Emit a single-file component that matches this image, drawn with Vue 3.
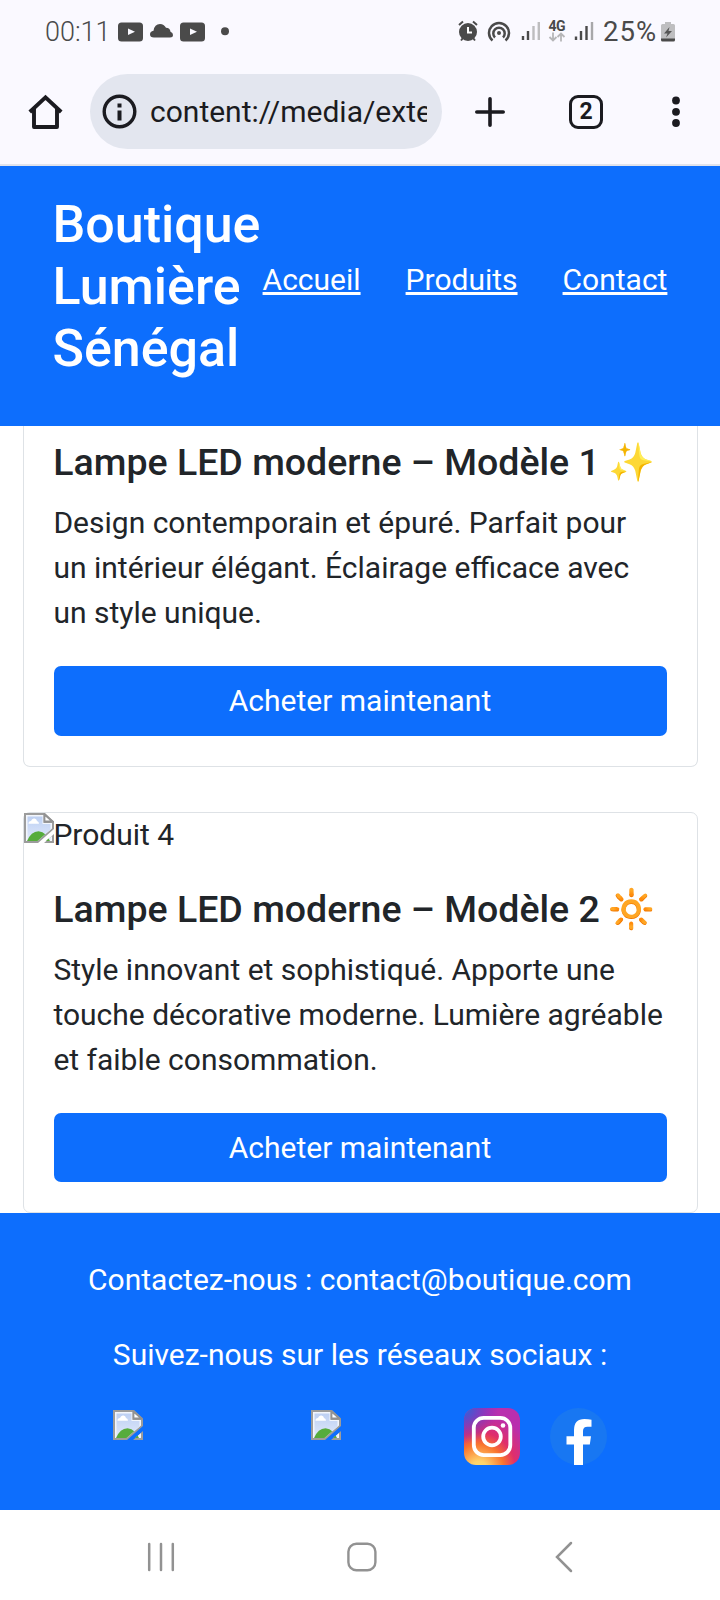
<script setup>
const links = ['Accueil', 'Produits', 'Contact']
const products = [
  {
    id: 3,
    image: '',
    title: 'Lampe LED moderne – Modèle 1',
    emoji: '✨',
    text: 'Design contemporain et épuré. Parfait pour un intérieur élégant. Éclairage efficace avec un style unique.',
  },
  {
    id: 4,
    image: 'Produit 4',
    title: 'Lampe LED moderne – Modèle 2',
    emoji: '🔆',
    text: 'Style innovant et sophistiqué. Apporte une touche décorative moderne. Lumière agréable et faible consommation.',
  },
]
</script>

<template>
  <div class="screen">
    <svg class="defs" width="0" height="0" aria-hidden="true">
      <defs>
        <linearGradient id="sky" x1="0" y1="0" x2="0" y2="1">
          <stop offset="0" stop-color="#bdd0f3" />
          <stop offset="1" stop-color="#dfe8fb" />
        </linearGradient>
        <radialGradient id="igWarm" cx=".27" cy="1.08" r=".99">
          <stop offset="0" stop-color="#ffdd70" />
          <stop offset=".15" stop-color="#ffd36b" />
          <stop offset=".45" stop-color="#f9742e" />
          <stop offset=".66" stop-color="#e02f6a" />
          <stop offset="1" stop-color="#b92fae" />
        </radialGradient>
        <radialGradient id="igCool" cx="0" cy="0" r=".62">
          <stop offset="0" stop-color="#3771d8" />
          <stop offset=".2" stop-color="#4b55cf" />
          <stop offset="1" stop-color="#7a28c8" stop-opacity="0" />
        </radialGradient>
        <symbol id="broken" viewBox="0 0 30 30">
          <path d="M0 0H21L30 8.500V16L14 30H0ZM30 21V30H20Z" fill="#9c9c9c" />
          <path d="M2 2H19.500V10H28V15.500L13.500 28H2ZM28 23V28H22.500Z" fill="#f3f6fc" />
          <path d="M3.500 3.500H18.500V11H26.500V16.500L14 27H3.500ZM26.500 24.500V27H24Z" fill="url(#sky)" />
          <path d="M4.500 10.500Q4.500 8 7 8Q8 5 10.500 5.500Q12.500 5.500 13 8Q15 8.500 15 10.800H4.500Z" fill="#fff" />
          <path d="M3 28Q7 18.500 14.500 18.200Q19 18.500 21.200 21.300L13.500 28ZM24.500 25.500L26 28H22Z" fill="#56ac3b" />
          <path d="M20.500 1.500V8.500H28.500Z" fill="#fff" stroke="#929292" stroke-width="1.800" />
        </symbol>
      </defs>
    </svg>

    <div class="status">
      <span class="time">00:11</span>
      <svg class="notif" width="112" height="20" viewBox="0 0 112 20" fill="#4a4a4a">
        <rect width="25" height="19" rx="3.500" y=".5" /><path d="M10 6.500V13L17 9.700Z" fill="#faf9ff" />
        <path d="M36 15.500Q32 15.500 32 12.200Q32 9.300 35.500 8.700Q36.500 2 42 2Q46 2 48 5.800Q52 6 52.500 9.700Q55 10.500 55 13Q55 15.500 52 15.500Z" />
        <rect x="62" y=".5" width="25" height="19" rx="3.500" /><path d="M72 6.500V13L79 9.700Z" fill="#faf9ff" />
        <circle cx="107" cy="9.200" r="4" />
      </svg>
      <svg class="sys" width="142" height="24" viewBox="0 0 142 24" fill="none" stroke="#4a4a4a">
        <circle cx="10" cy="12" r="9" fill="#4a4a4a" stroke="none" />
        <path d="M1 5L5 1.500M19 5L15 1.500M3 20.500L5 18M17 20.500L15 18" stroke-width="2" />
        <path d="M10 7V12.500H14" stroke="#fff" stroke-width="2" />
        <circle cx="41" cy="13" r="2" fill="#4a4a4a" stroke="none" />
        <path d="M34.500 20.500A10 10 0 1 1 47.500 20.500M37 17.500A5.700 5.700 0 1 1 45 17.500" stroke-width="2.500" />
        <path d="M65 16V20M70 11V20" stroke-width="2.400" />
        <path d="M75.500 6V20M80.800 2V20" stroke="#bdbdbf" stroke-width="2.400" />
        <path d="M95 12.500V20M91.500 17L95 20.500L98.500 17M103 21.500V13.500M99.500 17L103 13.500L106.500 17" stroke="#b6b6b8" stroke-width="1.800" />
        <path d="M118 16.500V20M123 11V20M128.500 6V20" stroke-width="2.400" />
        <path d="M134 2V20" stroke="#a8a8aa" stroke-width="2.400" />
        <text x="90.500" y="10.500" class="net" fill="#4a4a4a" stroke="none">4G</text>
      </svg>
      <span class="pct">25%</span>
      <svg class="battery" width="14" height="20" viewBox="0 0 14 20">
        <path d="M1.500 2H4V0H10V2H12.500Q14 2 14 3.500V17H0V3.500Q0 2 1.500 2Z" fill="#bebec0" />
        <path d="M0 16.500H14V18Q14 19.500 12.500 19.500H1.500Q0 19.500 0 18Z" fill="#4a4a4a" />
        <path d="M8.500 5L3 11.500H6.500L5 15.500L11 9H7.500Z" fill="#555" />
      </svg>
    </div>

    <div class="toolbar">
      <svg class="home" width="36" height="36" viewBox="0 0 36 36" fill="none" stroke="#1b1b20" stroke-width="3.900" stroke-linejoin="round">
        <path d="M1.800 18L17.500 3.300L33.200 18" stroke-linejoin="miter" /><path d="M6 15V33H29V15" />
      </svg>
      <div class="address">
        <svg width="36" height="36" viewBox="0 0 36 36">
          <circle cx="17.500" cy="17.500" r="15.300" fill="none" stroke="#1b1b20" stroke-width="3.400" />
          <path d="M15.500 9.500H19.500V13.500H15.500ZM15.500 16.500H19.500V26.500H15.500Z" fill="#1b1b20" />
        </svg>
        <span class="url">content://media/exte</span>
      </div>
      <svg class="plus" width="30" height="30" viewBox="0 0 30 30"><path d="M15 1.800V28.200M1.800 15H28.200" stroke="#1b1b20" stroke-width="3.600" stroke-linecap="round" /></svg>
      <div class="tabs">2</div>
      <svg class="more" width="8" height="32" viewBox="0 0 8 32" fill="#1b1b20"><circle cx="4" cy="4.500" r="3.900" /><circle cx="4" cy="15.800" r="3.900" /><circle cx="4" cy="27" r="3.900" /></svg>
    </div>

    <header class="site-header">
      <h1>Boutique Lumière Sénégal</h1>
      <nav><a v-for="l in links" :key="l">{{ l }}</a></nav>
    </header>

    <main>
      <article v-for="p in products" :key="p.id" class="card" :class="{ scrolled: !p.image }">
        <div v-if="p.image" class="picture">
          <svg width="30" height="30"><use href="#broken" /></svg><span>{{ p.image }}</span>
        </div>
        <div class="body">
          <h5>{{ p.title }} <span class="emoji">{{ p.emoji }}</span></h5>
          <p>{{ p.text }}</p>
          <div class="buy">Acheter maintenant</div>
        </div>
      </article>
    </main>

    <footer>
      <p>Contactez-nous : contact@boutique.com</p>
      <p>Suivez-nous sur les réseaux sociaux :</p>
      <div class="social">
        <svg class="missing" width="30" height="30"><use href="#broken" /></svg>
        <svg class="missing second" width="30" height="30"><use href="#broken" /></svg>
        <svg class="insta" width="56" height="57" viewBox="0 0 56 57">
          <rect width="56" height="57" rx="12" fill="url(#igWarm)" />
          <rect width="56" height="57" rx="12" fill="url(#igCool)" />
          <g fill="none" stroke="#fff" stroke-width="3.800"><rect x="9.800" y="9.800" width="36.500" height="37.300" rx="10" /><circle cx="28" cy="28.500" r="8.800" /></g>
          <circle cx="39" cy="17.500" r="2.300" fill="#fff" />
        </svg>
        <svg width="57" height="57" viewBox="0 0 57 57">
          <circle cx="28.500" cy="28.500" r="28.500" fill="#1877f2" />
          <path d="M24 57V36.500H16.500V28.200H24V22Q24 11 34.500 11Q38.500 11 41.500 11.700V18.700H37.500Q33 18.700 33 23V28.200H41L39.800 36.500H33V57Z" fill="#fff" />
        </svg>
      </div>
    </footer>

    <div class="system-nav">
      <svg width="28" height="30" viewBox="0 0 28 30"><path d="M2.200 2V28M14 2V28M25.800 2V28" stroke="#929292" stroke-width="2.500" stroke-linecap="round" /></svg>
      <svg class="home-key" width="30" height="30" viewBox="0 0 30 30"><rect x="1.400" y="1.700" width="27" height="26.600" rx="8" fill="none" stroke="#929292" stroke-width="2.400" /></svg>
      <svg width="18" height="32" viewBox="0 0 18 32"><path d="M16 2L2 16L16 30" fill="none" stroke="#929292" stroke-width="2.500" stroke-linecap="round" /></svg>
    </div>
  </div>
</template>

<style>
body { margin: 0; background: #fff; }
</style>

<style scoped>
* { box-sizing: border-box; }
.screen { width: 720px; height: 1600px; overflow: hidden; display: flex; flex-direction: column; background: #fff; color: #212529; font: 30px/45px Roboto, "Noto Sans", sans-serif; }
.screen svg { display: block; flex: none; }
.screen .defs { position: absolute; }
h1, h5, p { margin: 0; font-weight: 500; }
.status { height: 64px; flex: none; padding-left: 45px; display: flex; align-items: center; background: #faf9ff; color: #4a4a4a; font-size: 27px; font-weight: 300; line-height: 32px; }
.time { width: 73px; white-space: nowrap; }
.sys { margin-left: 228px; overflow: visible; }
.net { font: 700 14px Roboto, sans-serif; letter-spacing: -.5px; }
.pct { width: 58px; margin-left: 3px; white-space: nowrap; font-weight: 400; font-size: 27.500px; letter-spacing: 1px; }
.toolbar { height: 102px; flex: none; padding-left: 28px; display: flex; align-items: center; border-bottom: 2px solid #e1e3eb; background: #faf9ff; padding-bottom: 5px; }
.address { width: 352px; height: 75px; margin-left: 26px; padding: 0 15px 0 12px; border-radius: 38px; display: flex; align-items: center; background: #e3e6ef; color: #1b1b20; }
.url { margin-left: 12px; flex: 1; overflow: hidden; white-space: nowrap; }
.plus { margin-left: 33px; }
.tabs { width: 34px; height: 34px; margin-left: 64px; border: 3.500px solid #1b1b20; border-radius: 9px; text-align: center; color: #1b1b20; font-size: 23px; font-weight: 700; line-height: 28px; }
.more { margin-left: 69px; }
.site-header { height: 260px; flex: none; padding: 27.500px 52.600px 30px 52.400px; display: flex; justify-content: space-between; align-items: flex-start; background: #0d6efd; color: #fff; }
h1 { width: 210px; font-size: 52px; line-height: 62.460px; }
nav { display: flex; gap: 45px; margin-top: 63.500px; }
nav a { text-decoration: underline; }
main { height: 787px; flex: none; padding: 0 22px 0 23px; }
.card { border: 1px solid #dee2e6; border-radius: 7px; margin-bottom: 45px; }
.card.scrolled { border-top: 0; border-radius: 0 0 7px 7px; }
.scrolled .body { padding-top: 14px; }
.picture { height: 44px; display: flex; line-height: 43px; }
.picture span { margin-left: -.6px; }
.body { padding: 30px; }
h5 { margin-left: -.7px; font-size: 37.500px; line-height: 45px; white-space: nowrap; }
.emoji { margin-left: -.8px; font-family: "Noto Color Emoji", Roboto, sans-serif; line-height: 1; }
.body p { margin: 15px .6px 30.600px -.6px; font-weight: 400; }
.buy { height: 69.400px; padding-right: 1px; border-radius: 7px; background: #0d6efd; color: #fff; text-align: center; line-height: 69px; }
.scrolled .buy { height: 70.400px; }
footer { height: 297px; flex: none; padding-top: 44px; background: #0d6efd; color: #fff; text-align: center; }
footer p { margin-bottom: 30px; font-weight: 400; }
.social { display: flex; margin-top: 31px; padding-left: 113px; }
.missing { margin-top: 2px; }
.second { margin-left: 168px; }
.insta { margin: 0 30px 0 123px; }
.system-nav { flex: 1; display: flex; align-items: center; padding: 4px 147px 0; background: #fff; }
.home-key { margin: 0 178px 0 172px; }
</style>
